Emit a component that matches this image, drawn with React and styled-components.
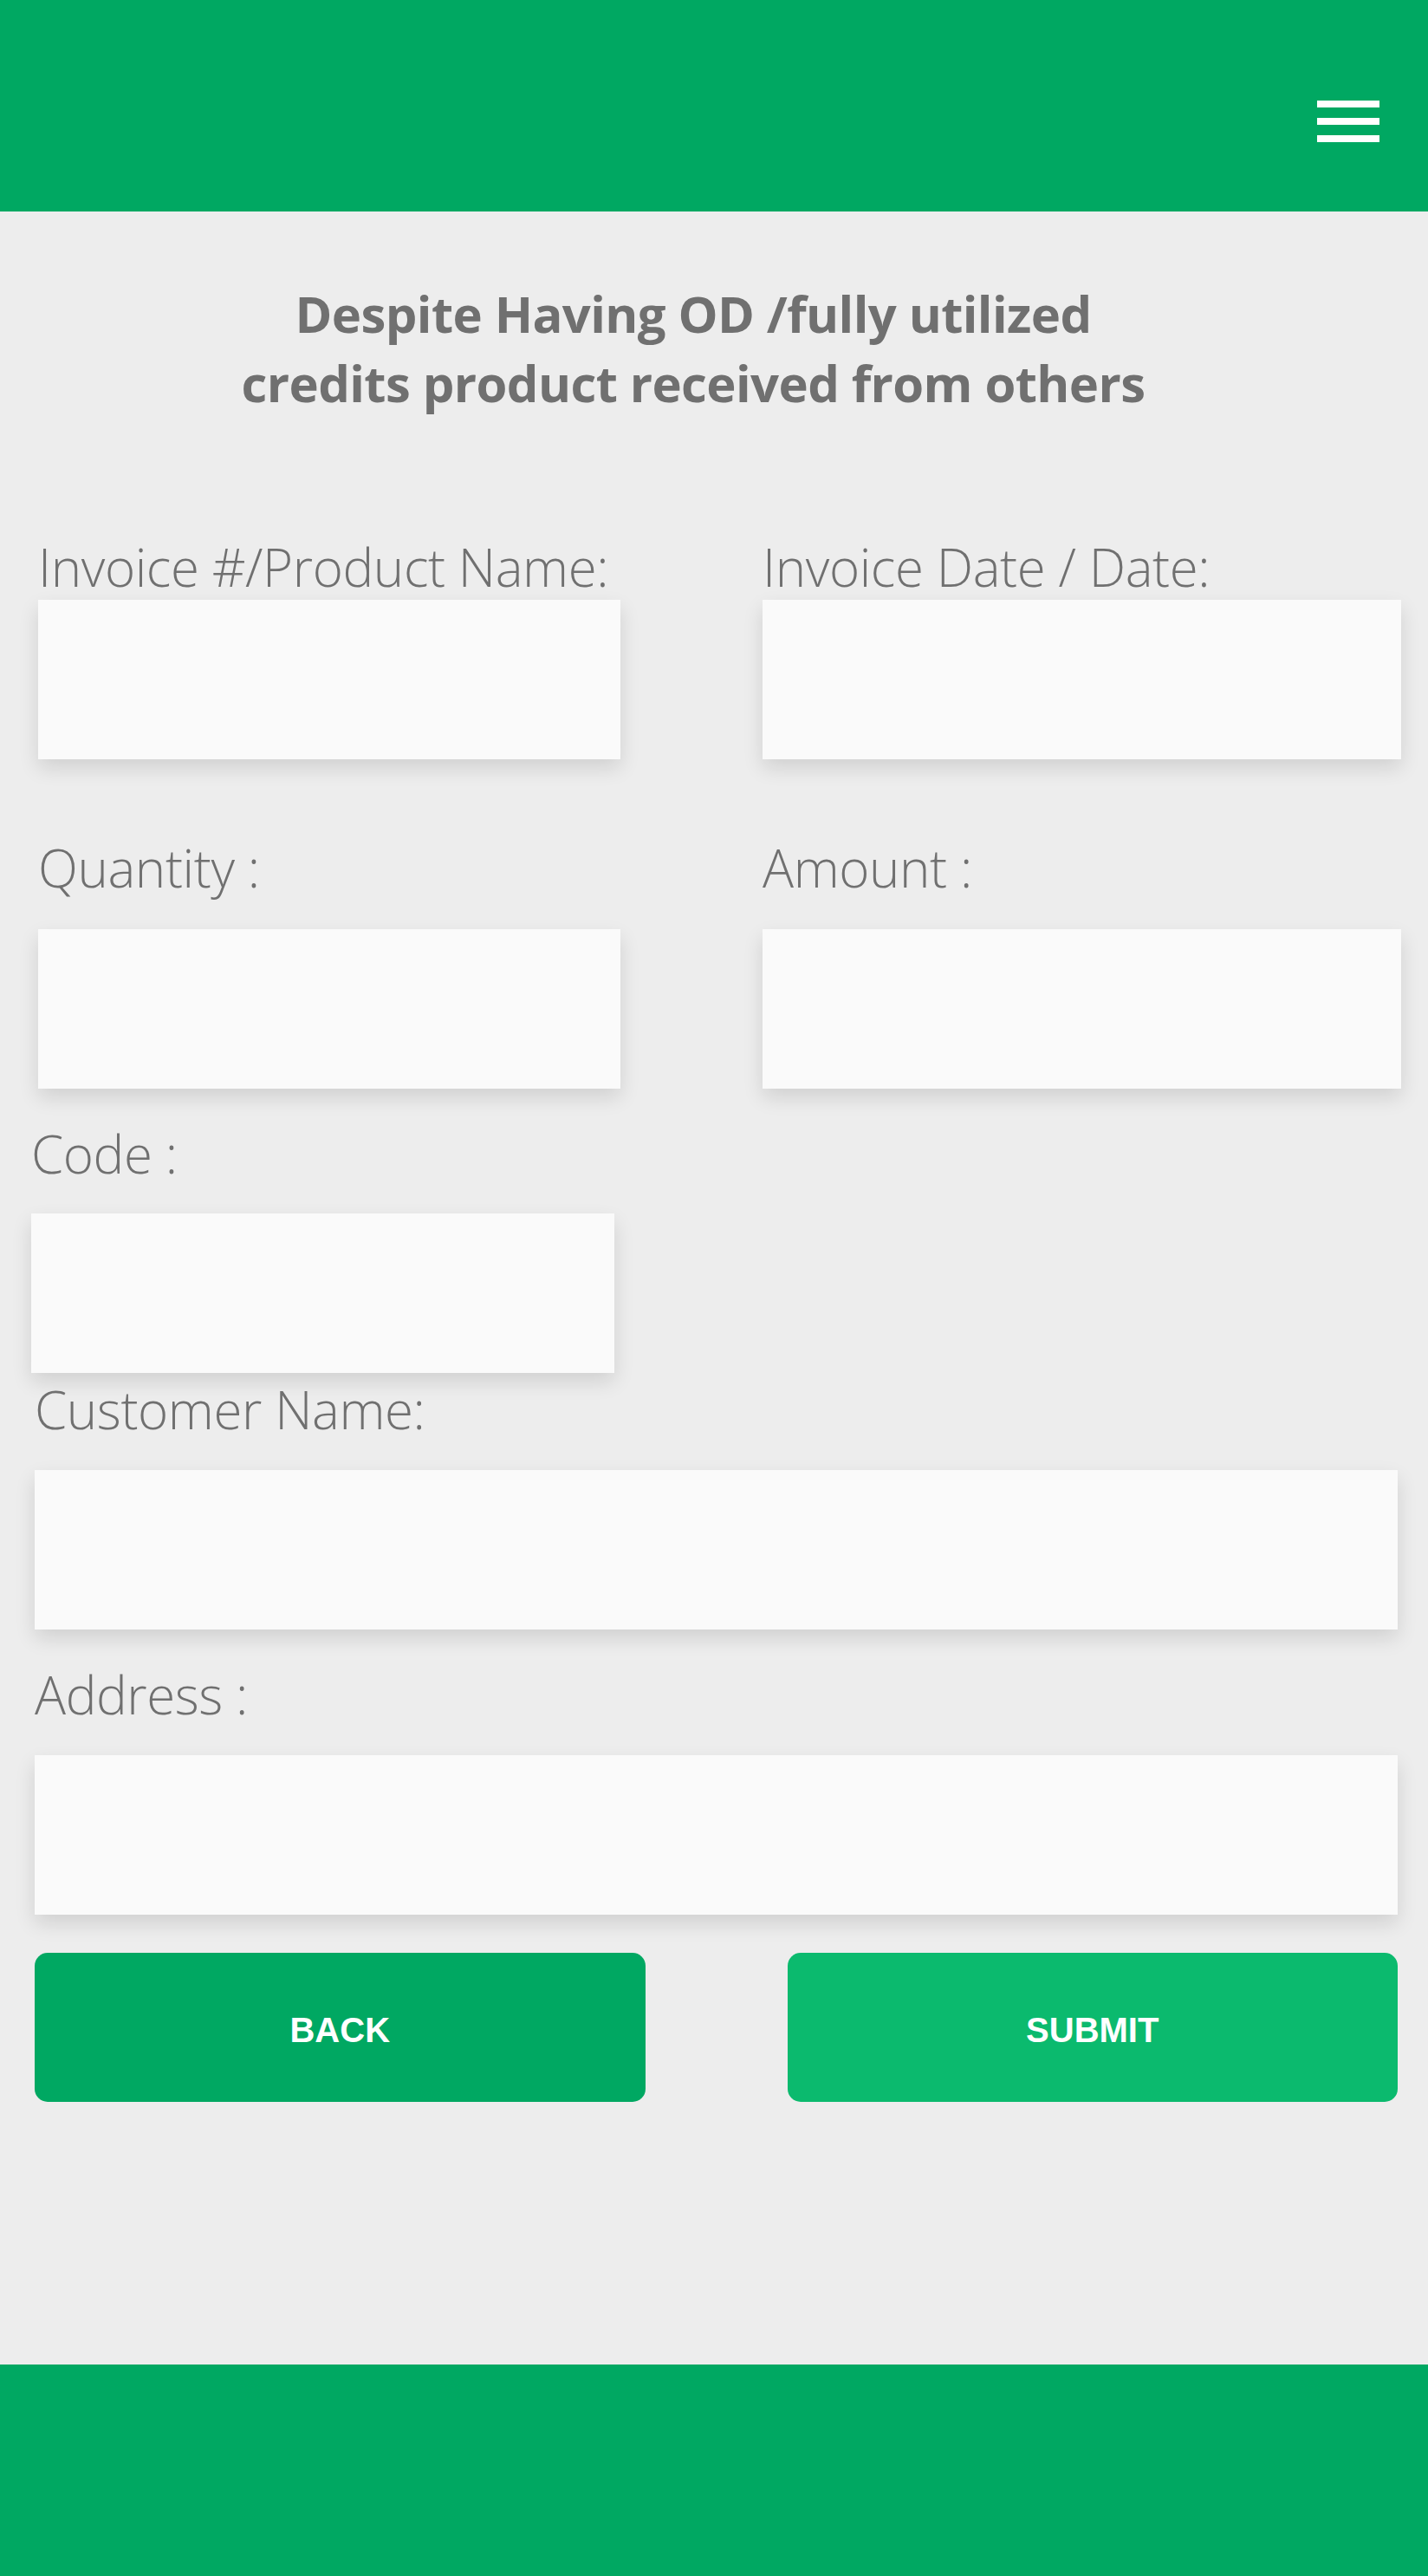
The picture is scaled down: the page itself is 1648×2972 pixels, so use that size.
import React from 'react';
import styled, { createGlobalStyle } from 'styled-components';

const GlobalStyle = createGlobalStyle`
  * { box-sizing: border-box; }
  html, body { margin: 0; padding: 0; }
  body {
    background: #ededed;
    font-family: "Open Sans", "Noto Sans", sans-serif;
    color: #707070;
  }
`;

const Screen = styled.div`
  display: flex;
  flex-direction: column;
  height: 2972px;
  background: #ededed;
`;

const TopBar = styled.header`
  flex: 0 0 244px;
  background: #00a862;
  display: flex;
  justify-content: flex-end;
  align-items: flex-start;
  padding: 116px 56px 0 0;
`;

const Burger = styled.button`
  display: flex;
  flex-direction: column;
  gap: 12px;
  padding: 0;
  border: none;
  background: none;
  cursor: pointer;

  span {
    display: block;
    width: 72px;
    height: 8px;
    background: #fff;
  }
`;

const Main = styled.main`
  flex: 1;
  padding-top: 78px;
`;

const Title = styled.h1`
  margin: 0 0 136px;
  padding-right: 48px;
  text-align: center;
  font-size: 58px;
  font-weight: 700;
  line-height: 80px;
  letter-spacing: -0.6px;
  color: #707070;
`;

const Form = styled.form`
  display: flex;
  flex-direction: column;
  padding: 0 35px 0 40px;
`;

const PairRow = styled.div`
  display: grid;
  grid-template-columns: 672px 737px;
  column-gap: 164px;
  margin: 0 -4px ${p => p.$after || 0}px 4px;
`;

const Field = styled.div`
  display: flex;
  flex-direction: column;
  width: ${p => p.$width || '100%'};
  margin-left: ${p => p.$shift || 0}px;
  margin-bottom: ${p => p.$after || 0}px;
`;

const Label = styled.label`
  font-size: 60px;
  font-weight: 350;
  line-height: 72px;
  letter-spacing: -0.4px;
  color: #707070;
  margin-bottom: ${p => p.$gap ?? 34}px;
  white-space: nowrap;
`;

const Input = styled.input`
  display: block;
  width: 100%;
  height: 184px;
  border: none;
  border-radius: 0;
  background: #fafafa;
  box-shadow: 0 10px 22px rgba(0, 0, 0, 0.12);
  padding: 0 24px;
  font-family: inherit;
  font-size: 48px;
  color: #555;
  outline: none;
`;

const ButtonRow = styled.div`
  display: grid;
  grid-template-columns: 1fr 1fr;
  column-gap: 164px;
`;

const ActionButton = styled.button`
  height: 172px;
  padding: 6px 0 0;
  border: none;
  border-radius: 15px;
  background: ${p => (p.$light ? '#0bba6e' : '#00a862')};
  color: #fff;
  font-family: "Liberation Sans", Arial, sans-serif;
  font-size: 40px;
  font-weight: 700;
  text-transform: uppercase;
  cursor: pointer;
`;

const BottomBar = styled.footer`
  flex: 0 0 244px;
  background: #00a862;
`;

export default function App() {
  return (
    <>
      <GlobalStyle />
      <Screen>
        <TopBar>
          <Burger aria-label="menu">
            <span />
            <span />
            <span />
          </Burger>
        </TopBar>

        <Main>
          <Title>
            Despite Having OD /fully utilized
            <br />
            credits product received from others
          </Title>

          <Form onSubmit={e => e.preventDefault()}>
            <PairRow $after={89}>
              <Field>
                <Label $gap={2}>Invoice #/Product Name:</Label>
                <Input />
              </Field>
              <Field>
                <Label $gap={2}>Invoice Date / Date:</Label>
                <Input />
              </Field>
            </PairRow>

            <PairRow $after={39}>
              <Field>
                <Label $gap={35}>Quantity :</Label>
                <Input />
              </Field>
              <Field>
                <Label $gap={35}>Amount :</Label>
                <Input />
              </Field>
            </PairRow>

            <Field $width="673px" $shift={-4} $after={6}>
              <Label $gap={33}>Code :</Label>
              <Input />
            </Field>

            <Field $after={39}>
              <Label>Customer Name:</Label>
              <Input />
            </Field>

            <Field $after={44}>
              <Label>Address :</Label>
              <Input />
            </Field>

            <ButtonRow>
              <ActionButton type="button">Back</ActionButton>
              <ActionButton type="submit" $light>Submit</ActionButton>
            </ButtonRow>
          </Form>
        </Main>

        <BottomBar />
      </Screen>
    </>
  );
}
